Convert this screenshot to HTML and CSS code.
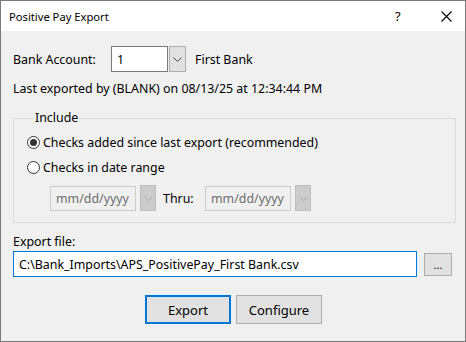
FILE: index.html
```html
<!DOCTYPE html>
<html lang="en">
<head>
    <meta charset="UTF-8">
    <meta name="viewport" content="width=device-width, initial-scale=1.0">
    <title>Positive Pay Export</title>
    <link rel="stylesheet" href="styles.css">
</head>
<body>

<div class="window">
    <div class="titlebar">
        <span class="title">Positive Pay Export</span>
        <span class="help">?</span>
        <span class="close">
            <svg width="11" height="11" viewBox="0 0 11 11"><path d="M0.5 0.5 L10.5 10.5 M10.5 0.5 L0.5 10.5" stroke="#000" stroke-width="1.1" fill="none"/></svg>
        </span>
    </div>

    <div class="content">
        <div class="bank-row">
            <span class="bank-label">Bank Account:</span>
            <div class="textbox bank-input">1</div>
            <div class="combo-btn">
                <svg width="9" height="5" viewBox="0 0 9 5"><path d="M0.5 0.5 L4.5 4.5 L8.5 0.5" stroke="#444" fill="none"/></svg>
            </div>
            <span class="bank-name">First Bank</span>
        </div>

        <div class="last-export">Last exported by (BLANK) on 08/13/25 at 12:34:44 PM</div>

        <fieldset class="group">
            <legend>Include</legend>
            <div class="radio-row">
                <span class="radio checked"></span>
                <span>Checks added since last export (recommended)</span>
            </div>
            <div class="radio-row">
                <span class="radio"></span>
                <span>Checks in date range</span>
            </div>
            <div class="date-row">
                <div class="textbox date-input">mm/dd/yyyy</div>
                <div class="combo-btn disabled">
                    <svg width="9" height="5" viewBox="0 0 9 5"><path d="M0.5 0.5 L4.5 4.5 L8.5 0.5" stroke="#a8a8a8" fill="none"/></svg>
                </div>
                <span class="thru">Thru:</span>
                <div class="textbox date-input">mm/dd/yyyy</div>
                <div class="combo-btn disabled">
                    <svg width="9" height="5" viewBox="0 0 9 5"><path d="M0.5 0.5 L4.5 4.5 L8.5 0.5" stroke="#a8a8a8" fill="none"/></svg>
                </div>
            </div>
        </fieldset>

        <div class="file-label">Export file:</div>
        <div class="file-row">
            <div class="textbox file-input">C:\Bank_Imports\APS_PositivePay_First Bank.csv</div>
            <div class="btn browse">...</div>
        </div>

        <div class="actions">
            <div class="btn action default">Export</div>
            <div class="btn action">Configure</div>
        </div>
    </div>
</div>

</body>
</html>
```

FILE: styles.css
```css
body {
    margin: 0;
    padding: 0;
    font-family: "Noto Sans", "Open Sans", sans-serif;
    font-size: 12.4px;
    color: #000;
}

.window {
    width: 466px;
    height: 342px;
    box-sizing: border-box;
    border: 1px solid #7a7a7a;
    background-color: #f0f0f0;
    display: flex;
    flex-direction: column;
}

.titlebar {
    height: 30px;
    background-color: #fff;
    display: flex;
    align-items: center;
    padding-left: 8px;
}

.title {
    flex: 1;
    font-size: 11.2px;
}

.help {
    font-size: 13px;
    width: 46px;
    text-align: left;
}

.close {
    width: 24px;
    display: flex;
    padding-top: 1px;
}

.content {
    padding: 15px 9px 0 12px;
    display: flex;
    flex-direction: column;
}

.textbox {
    box-sizing: border-box;
    height: 26px;
    background-color: #fff;
    border: 1px solid #7a7a7a;
    padding: 0 5px;
    display: flex;
    align-items: center;
    white-space: nowrap;
}

.combo-btn {
    box-sizing: border-box;
    width: 17px;
    height: 26px;
    background-color: #e1e1e1;
    border: 1px solid #adadad;
    display: flex;
    align-items: center;
    justify-content: center;
}

.combo-btn.disabled {
    background-color: #cccccc;
    border-color: #bfbfbf;
}

.bank-row {
    display: flex;
    align-items: center;
}

.bank-label {
    width: 98px;
}

.bank-input {
    width: 57px;
    margin-right: 1px;
}

.bank-name {
    margin-left: 9px;
}

.last-export {
    margin-top: 8px;
    height: 18px;
}

.group {
    margin: 13px 0 0 0;
    padding: 0 0 10px 13px;
    border: 1px solid #dcdcdc;
    height: 112px;
    box-sizing: border-box;
}

.group legend {
    padding: 0 1px;
    margin-left: 7px;
    line-height: 14px;
}

.radio-row {
    display: flex;
    align-items: center;
    height: 18px;
    margin-top: 8px;
}

.radio-row + .radio-row {
    margin-top: 7px;
}

.radio {
    box-sizing: border-box;
    width: 13px;
    height: 13px;
    border: 1px solid #333;
    border-radius: 50%;
    background-color: #fff;
    margin-right: 3px;
    display: flex;
    align-items: center;
    justify-content: center;
}

.radio.checked::after {
    content: "";
    width: 7px;
    height: 7px;
    border-radius: 50%;
    background-color: #333;
}

.date-row {
    display: flex;
    align-items: center;
    margin-top: 9px;
    margin-left: 23px;
}

.date-input {
    width: 86px;
    height: 25px;
    background-color: #f0f0f0;
    border-color: #cccccc;
    color: #6d6d6d;
    margin-right: 4px;
}

.date-row .combo-btn {
    width: 16px;
    height: 26px;
}

.thru {
    margin-left: 7px;
    width: 42px;
}

.file-label {
    margin-top: 10px;
    height: 18px;
}

.file-row {
    display: flex;
    align-items: center;
    margin-top: 0;
}

.file-input {
    width: 404px;
    border-color: #0078d7;
}

.btn {
    box-sizing: border-box;
    background-color: #e1e1e1;
    border: 1px solid #adadad;
    display: flex;
    align-items: center;
    justify-content: center;
}

.browse {
    width: 28px;
    height: 23px;
    margin-left: 7px;
    font-size: 11px;
}

.actions {
    display: flex;
    justify-content: center;
    gap: 5px;
    margin-top: 18px;
    padding-right: 2px;
}

.action {
    width: 86px;
    height: 29px;
    font-size: 13px;
}

.action.default {
    border: 2px solid #0078d7;
}
```
